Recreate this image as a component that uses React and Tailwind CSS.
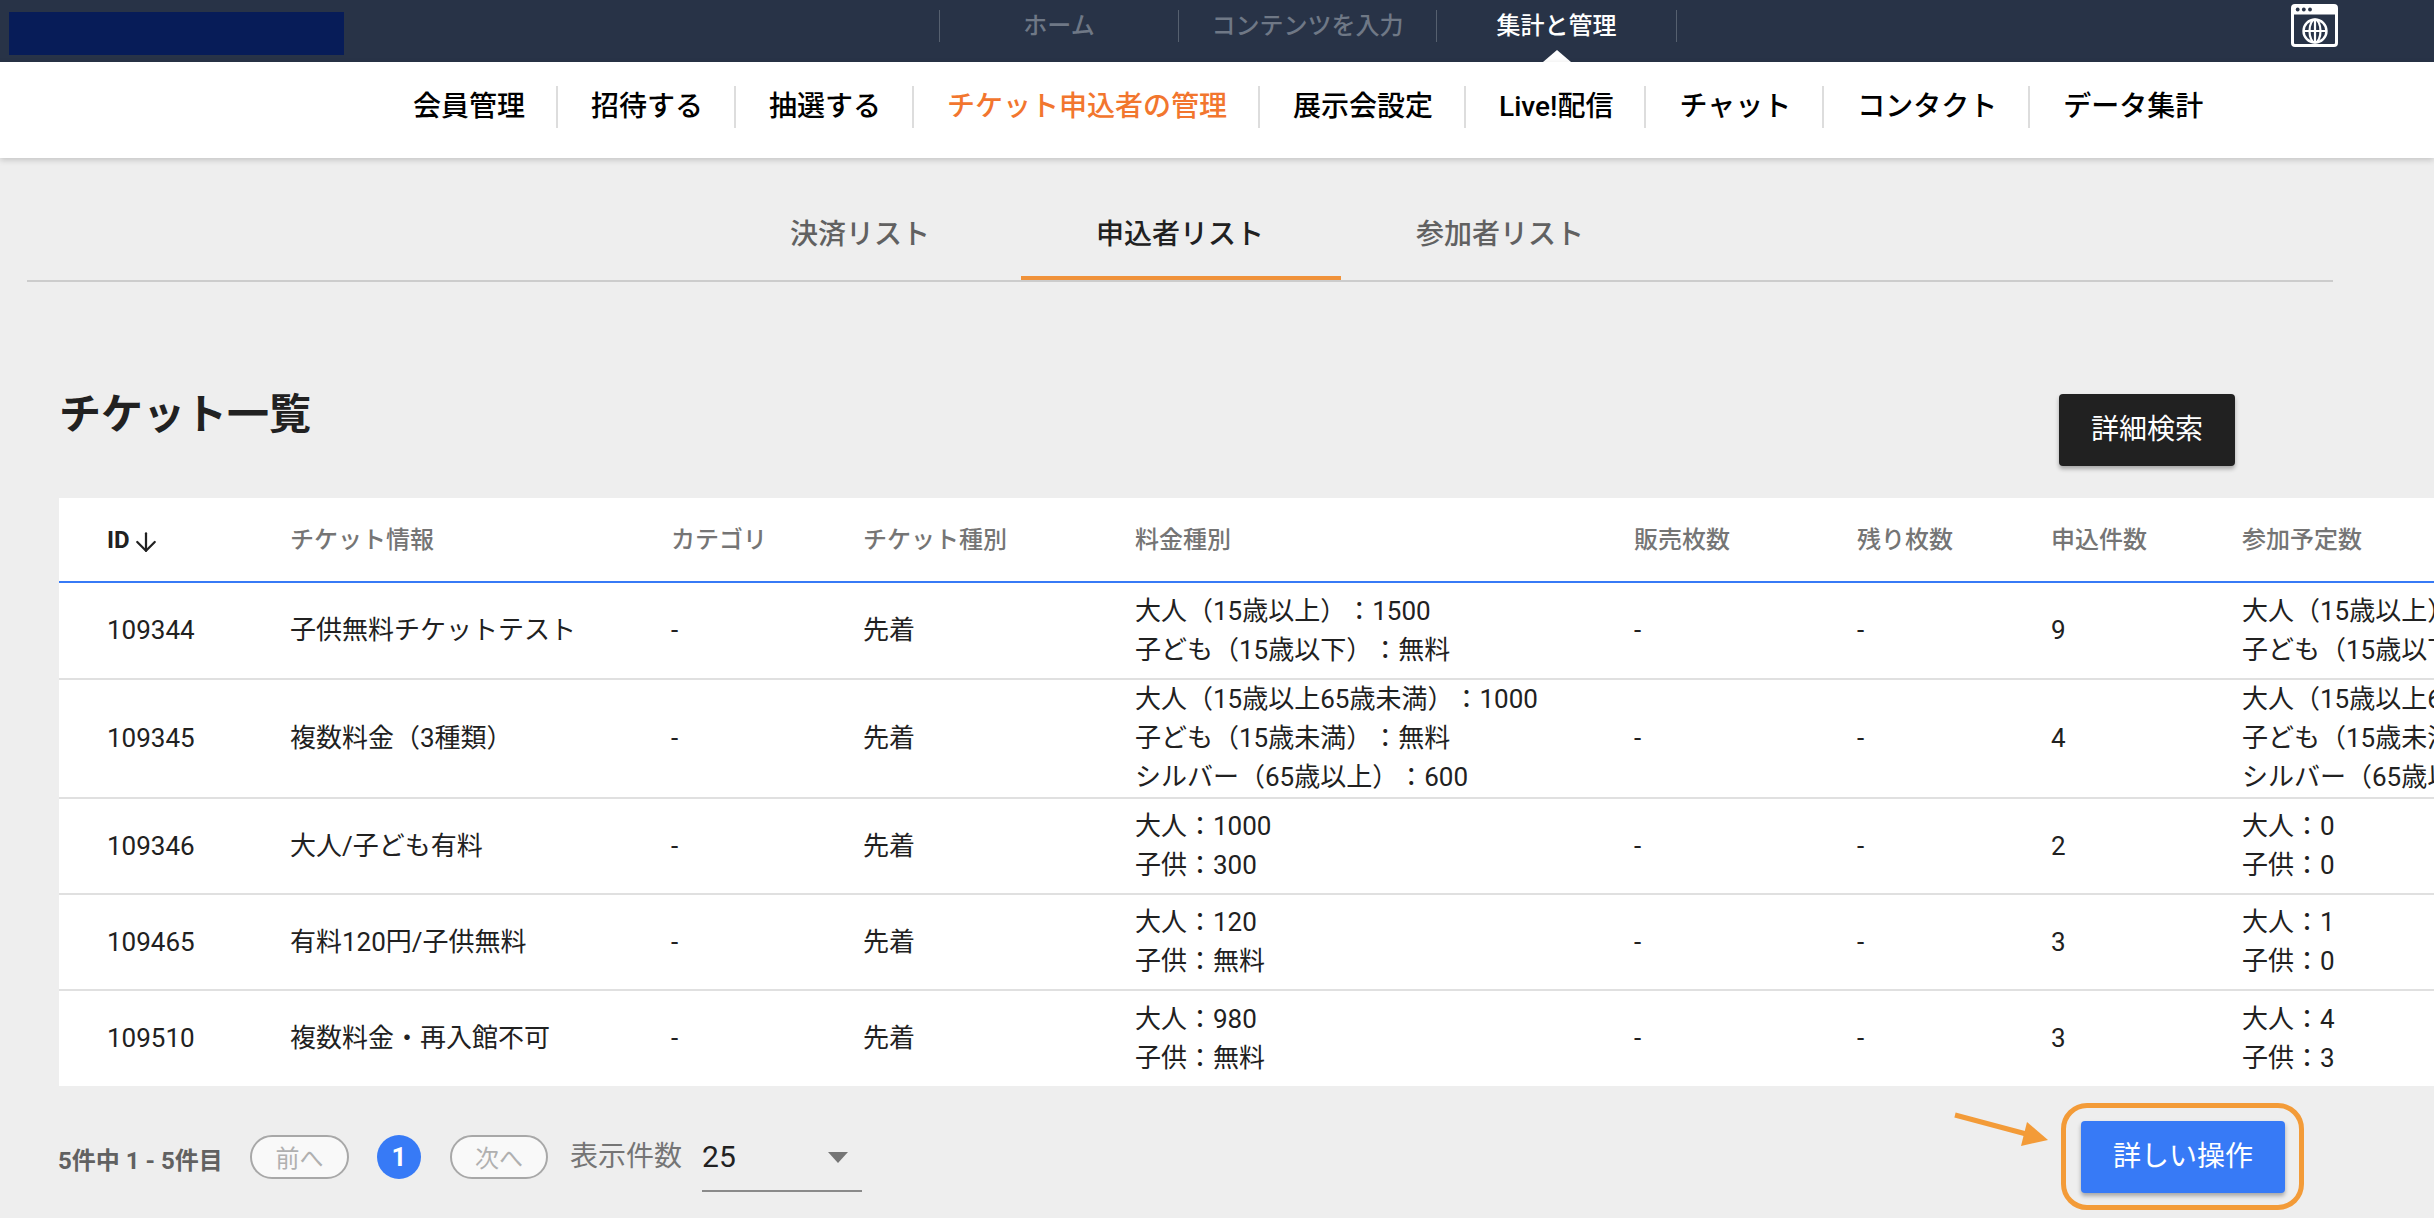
import React from 'react'
import { ArrowDown } from 'lucide-react'

const topLinks = [
  { label: 'ホーム', width: 'w-[239px]', color: 'text-[#6f7886]' },
  { label: 'コンテンツを入力', width: 'w-[258px]', color: 'text-[#6f7886]' },
  { label: '集計と管理', width: 'w-[240px]', color: 'text-white', current: true },
]

const navLinks = ['会員管理', '招待する', '抽選する', 'チケット申込者の管理', '展示会設定', 'Live!配信', 'チャット', 'コンタクト', 'データ集計']

const columns = ['チケット情報', 'カテゴリ', 'チケット種別', '料金種別', '販売枚数', '残り枚数', '申込件数', '参加予定数']

const rows = [
  {
    id: '109344',
    name: '子供無料チケットテスト',
    height: 'h-[97px]',
    prices: ['大人（15歳以上）：1500', '子ども（15歳以下）：無料'],
    count: '9',
    planned: ['大人（15歳以上）：0', '子ども（15歳以下）：0'],
  },
  {
    id: '109345',
    name: '複数料金（3種類）',
    height: 'h-[119px]',
    prices: ['大人（15歳以上65歳未満）：1000', '子ども（15歳未満）：無料', 'シルバー（65歳以上）：600'],
    count: '4',
    planned: ['大人（15歳以上65歳未満）：0', '子ども（15歳未満）：0', 'シルバー（65歳以上）：0'],
  },
  { id: '109346', name: '大人/子ども有料', height: 'h-[96px]', prices: ['大人：1000', '子供：300'], count: '2', planned: ['大人：0', '子供：0'] },
  { id: '109465', name: '有料120円/子供無料', height: 'h-[96px]', prices: ['大人：120', '子供：無料'], count: '3', planned: ['大人：1', '子供：0'] },
  { id: '109510', name: '複数料金・再入館不可', height: 'h-[95px]', prices: ['大人：980', '子供：無料'], count: '3', planned: ['大人：4', '子供：3'], last: true },
]

const WebIcon = () => (
  <svg width="47" height="43" viewBox="0 0 47 43" fill="none" className="ml-[614px] mt-[4px] shrink-0">
    <rect x="1.5" y="1.5" width="44" height="40" rx="2.5" stroke="#fff" strokeWidth="3" />
    <rect x="1.5" y="1.5" width="44" height="9" fill="#fff" />
    <circle cx="6.7" cy="5.5" r="1.9" fill="#283347" />
    <circle cx="12.8" cy="5.5" r="1.9" fill="#283347" />
    <circle cx="19" cy="5.5" r="1.9" fill="#283347" />
    <circle cx="24" cy="27" r="11.5" stroke="#fff" strokeWidth="2.4" />
    <ellipse cx="24" cy="27" rx="5.5" ry="11.5" stroke="#fff" strokeWidth="2.2" />
    <path d="M12.5 27h23M24 15.5v23" stroke="#fff" strokeWidth="2.2" />
  </svg>
)

export default function App() {
  return (
    <div className="w-full h-screen overflow-hidden bg-[#eeeeee] font-[Roboto,'Noto_Sans_CJK_JP',sans-serif] text-[#212121] [text-spacing-trim:space-all]">
      {/* Dark top bar */}
      <div className="flex h-[62px] bg-[#283347]">
        <div className="ml-[9px] mt-[12px] w-[335px] h-[43px] bg-[#071c58]" />
        <div className="ml-[595px] mt-[10px] flex h-[32px] border-l border-[#56606f]">
          {topLinks.map((link) => (
            <div
              key={link.label}
              className={`relative flex items-center justify-center border-r border-[#56606f] text-[24px] leading-[32px] font-medium ${link.width} ${link.color}`}
            >
              {link.label}
              {link.current && (
                <span className="absolute left-1/2 top-[40px] -translate-x-1/2 w-0 h-0 border-x-[14px] border-b-[12px] border-x-transparent border-b-white" />
              )}
            </div>
          ))}
        </div>
        <WebIcon />
      </div>

      {/* Main nav */}
      <div className="relative z-10 h-[96px] bg-white pl-[380px] pt-[24px] shadow-[0_2px_6px_rgba(0,0,0,0.18)]">
        <div className="flex">
          {navLinks.map((link, i) => (
            <div
              key={link}
              className={`flex h-[42px] items-center pl-[33px] pr-[31px] pb-[1px] text-[28px] leading-[38px] font-medium ${
                i < navLinks.length - 1 ? 'border-r-2 border-[#dddddd]' : ''
              } ${i === 3 ? 'text-[#f2762e]' : 'text-black'}`}
            >
              {link}
            </div>
          ))}
        </div>
      </div>

      {/* Tabs */}
      <div className="ml-[27px] w-[2306px] flex justify-center pl-[2px] border-b-2 border-[#cccccc]">
        <div className="w-[320px] h-[122px] pt-[59px] pr-[2px] text-center text-[28px] leading-[36px] font-medium text-[#616161]">決済リスト</div>
        <div className="w-[320px] h-[122px] pt-[59px] pr-[2px] text-center text-[28px] leading-[36px] font-medium text-[#212121] border-b-4 border-[#f0923a]">申込者リスト</div>
        <div className="w-[320px] h-[122px] pt-[59px] pr-[2px] text-center text-[28px] leading-[36px] font-medium text-[#616161]">参加者リスト</div>
      </div>

      {/* Title row */}
      <div className="mt-[105px] h-[79px] mb-[32px] pl-[59px] pr-[199px] flex items-start justify-between">
        <h1 className="mt-[3px] text-[42px] leading-[50px] font-bold">チケット一覧</h1>
        <button className="mt-[7px] w-[176px] h-[72px] rounded-[4px] bg-[#212121] text-white text-[28px] leading-[36px] shadow-[0_3px_4px_rgba(0,0,0,0.3)]">
          詳細検索
        </button>
      </div>

      {/* Table */}
      <div className="ml-[59px] bg-white">
        <table className="w-[2375px] table-fixed border-separate border-spacing-0 whitespace-nowrap text-left text-[26px] leading-[39px]">
          <colgroup>
            <col className="w-[183px]" />
            <col className="w-[381px]" />
            <col className="w-[192px]" />
            <col className="w-[272px]" />
            <col className="w-[499px]" />
            <col className="w-[223px]" />
            <col className="w-[194px]" />
            <col className="w-[191px]" />
            <col className="w-[240px]" />
          </colgroup>
          <thead>
            <tr>
              <th className="h-[85px] pl-12 pt-[2px] border-b-2 border-[#377af6] text-[24px] font-bold align-middle">
                <span className="inline-flex items-center">
                  ID
                  <ArrowDown size={30} strokeWidth={1.8} className="ml-[1px] mt-[2px]" />
                </span>
              </th>
              {columns.map((col) => (
                <th key={col} className="h-[85px] pl-12 pt-[2px] border-b-2 border-[#377af6] text-[24px] font-medium text-[#757575] align-middle">
                  {col}
                </th>
              ))}
            </tr>
          </thead>
          <tbody>
            {rows.map((row) => {
              const cell = row.last ? 'pl-12 align-middle' : 'pl-12 align-middle border-b-2 border-[#e0e0e0]'
              return (
                <tr key={row.id} className={row.height}>
                  <td className={cell}>{row.id}</td>
                  <td className={cell}>{row.name}</td>
                  <td className={cell}>-</td>
                  <td className={cell}>先着</td>
                  <td className={cell}>
                    {row.prices.map((p) => (
                      <div key={p}>{p}</div>
                    ))}
                  </td>
                  <td className={cell}>-</td>
                  <td className={cell}>-</td>
                  <td className={cell}>{row.count}</td>
                  <td className={`${cell} overflow-hidden`}>
                    {row.planned.map((p) => (
                      <div key={p}>{p}</div>
                    ))}
                  </td>
                </tr>
              )
            })}
          </tbody>
        </table>
      </div>

      {/* Pagination */}
      <div className="mt-[35px] ml-[58px] flex h-[72px] items-center">
        <span className="mt-[8px] w-[163px] text-[24px] leading-[32px] font-bold text-[#616161] whitespace-nowrap">5件中 1 - 5件目</span>
        <button className="ml-[29px] w-[99px] h-[44px] pt-[3px] rounded-full border-2 border-[#a8a8a8] bg-[#f9f9f9] text-[24px] leading-[32px] text-[#b0b0b0]">前へ</button>
        <span className="ml-[28px] flex w-[44px] h-[44px] items-center justify-center rounded-full bg-[#377af6] text-[26px] font-bold text-white">1</span>
        <button className="ml-[29px] w-[98px] h-[44px] pt-[3px] rounded-full border-2 border-[#a8a8a8] bg-[#f9f9f9] text-[24px] leading-[32px] text-[#b0b0b0]">次へ</button>
        <span className="ml-[22px] text-[28px] leading-[36px] text-[#757575] whitespace-nowrap">表示件数</span>
        <div className="ml-[20px] flex h-[71px] w-[160px] self-start items-center justify-between border-b-2 border-[#8a8a8a] pr-[14px]">
          <span className="mt-[2px] text-[30px] leading-[40px] text-[#212121]">25</span>
          <span className="mt-[3px] w-0 h-0 border-x-[10px] border-t-[11px] border-x-transparent border-t-[#757575]" />
        </div>

        <div className="relative ml-auto mr-[149px]">
          <button className="block w-[204px] h-[72px] rounded-[4px] bg-[#377af6] text-white text-[28px] leading-[36px] shadow-[0_3px_4px_rgba(0,0,0,0.3)]">
            詳しい操作
          </button>
          <span className="absolute -left-[20px] -top-[18px] -right-[19px] -bottom-[17px] rounded-[26px] border-[5px] border-[#f39b38]" />
          <svg width="100" height="40" viewBox="0 0 100 40" className="absolute -left-[131px] -top-[11px]">
            <path d="M5 5L80 25" stroke="#f39b38" strokeWidth="5" />
            <path d="M77 12L98 30L71 36Z" fill="#f39b38" />
          </svg>
        </div>
      </div>
    </div>
  )
}
